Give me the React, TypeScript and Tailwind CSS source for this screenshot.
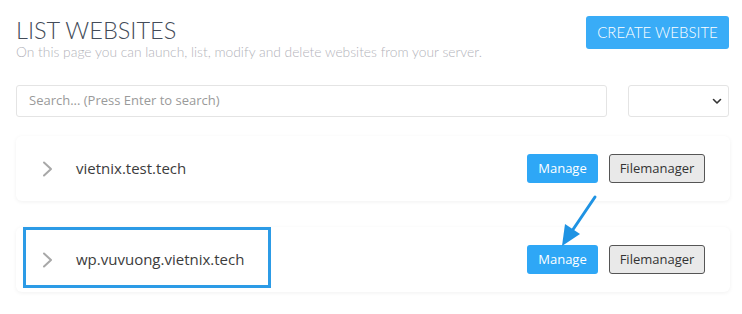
import React from "react";

function Chevron() {
  return (
    <svg width="12" height="16" viewBox="0 0 12 16" fill="none">
      <path d="M2 1.5 L9 8 L2 14.5" stroke="#a8a8a8" strokeWidth="2" strokeLinecap="round" strokeLinejoin="round" />
    </svg>
  );
}

function Row({ name }: { name: string }) {
  return (
    <div className="flex h-[65px] items-center rounded-[6px] bg-white pl-[26px] pr-[25px] shadow-[0_1px_4px_rgba(0,0,0,0.06)]">
      <Chevron />
      <span className="ml-[22px] text-[15px] font-medium text-[#3c3c3c]" style={{ fontFamily: '"Open Sans", sans-serif' }}>
        {name}
      </span>
      <div className="ml-auto flex gap-[11px]" style={{ fontFamily: '"Open Sans", sans-serif' }}>
        <button className="h-[29px] w-[71px] rounded-[3px] bg-[#2ea7f6] text-[13px] text-white">Manage</button>
        <button className="h-[29px] w-[96px] rounded-[3px] border border-[#555] bg-[#e9e9e9] text-[13px] text-[#333]">Filemanager</button>
      </div>
    </div>
  );
}

export default function App() {
  return (
    <div className="relative h-[314px] w-[742px] overflow-hidden bg-white">
      <div className="pl-4 pr-[13px] pt-4">
        <div className="flex items-start justify-between">
          <div style={{ fontFamily: 'Lato, sans-serif' }}>
            <h1 className="text-[23.5px] font-light leading-[28px] text-[#434b58]">LIST WEBSITES</h1>
            <p className="text-[13.8px] font-light leading-[16px] text-[#b3b3ba]">
              On this page you can launch, list, modify and delete websites from your server.
            </p>
          </div>
          <button
            className="h-[33px] w-[143px] rounded-[3px] bg-[#39acf7] text-[15px] font-light text-white"
            style={{ fontFamily: 'Lato, sans-serif' }}
          >
            CREATE WEBSITE
          </button>
        </div>

        <div className="mt-[25px] flex gap-[21px]" style={{ fontFamily: '"Open Sans", sans-serif' }}>
          <div className="flex h-[32px] flex-1 items-center rounded-[3px] border border-[#e4e4e4] bg-white pl-[12px] text-[13px] text-[#9a9a9a]">
            Search... (Press Enter to search)
          </div>
          <div className="flex h-[32px] w-[101px] items-center justify-end rounded-[3px] border border-[#e4e4e4] bg-white pr-[6px]">
            <svg width="10" height="7" viewBox="0 0 10 7" fill="none">
              <path d="M1.5 1.5 L5 5 L8.5 1.5" stroke="#333" strokeWidth="1.6" strokeLinecap="round" strokeLinejoin="round" />
            </svg>
          </div>
        </div>

        <div className="mt-[19px] flex w-[714px] flex-col gap-[26px]">
          <Row name="vietnix.test.tech" />
          <Row name="wp.vuvuong.vietnix.tech" />
        </div>
      </div>

      <div className="absolute left-[23px] top-[227px] h-[61px] w-[248px] border-[3px] border-[#2c9be6]" />

      <svg className="absolute left-0 top-0" width="742" height="314" viewBox="0 0 742 314">
        <line x1="595" y1="197" x2="572" y2="231" stroke="#1f93e3" strokeWidth="3" strokeLinecap="round" />
        <polygon points="562,246 565,224 580,234" fill="#1f93e3" />
      </svg>
    </div>
  );
}
